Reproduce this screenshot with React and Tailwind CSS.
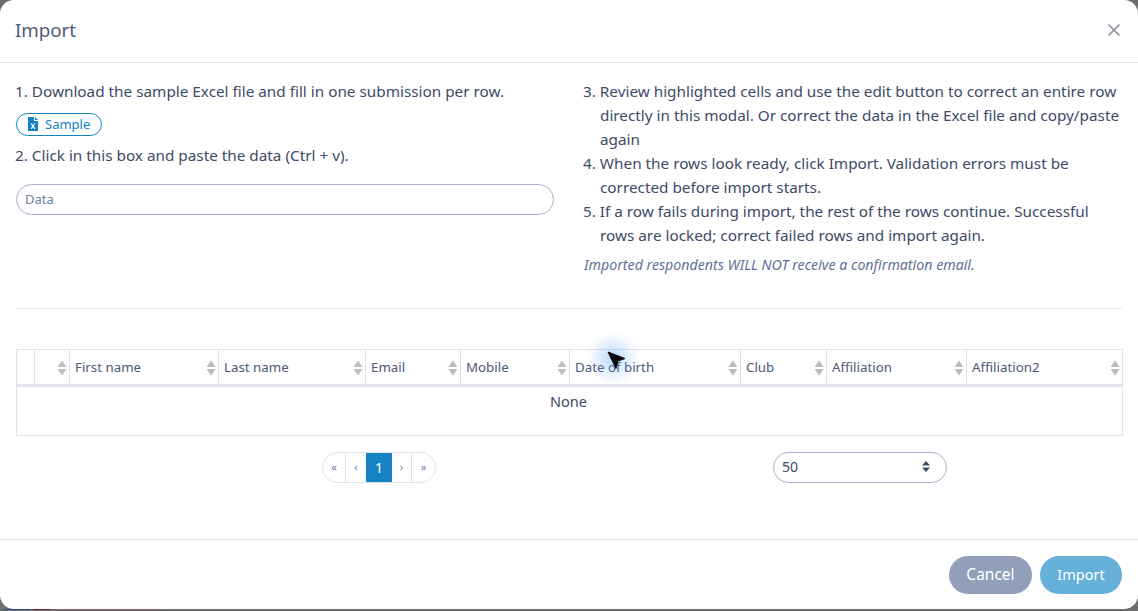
const columns = [
  { label: "", width: "w-[18px]", sort: false },
  { label: "", width: "w-[35px]", sort: true },
  { label: "First name", width: "w-[149px]", sort: true },
  { label: "Last name", width: "w-[147px]", sort: true },
  { label: "Email", width: "w-[95px]", sort: true },
  { label: "Mobile", width: "w-[109px]", sort: true },
  { label: "Date of birth", width: "w-[171px]", sort: true },
  { label: "Club", width: "w-[86px]", sort: true },
  { label: "Affiliation", width: "w-[140px]", sort: true },
  { label: "Affiliation2", width: "w-[156px]", sort: true },
];

const SortIcon = () => (
  <svg width="10" height="16" viewBox="0 0 10 16" className="absolute right-[2px] top-[10px]">
    <path d="M5 0.5 L9.5 7 H0.5 Z" fill="#bdbdbd" />
    <path d="M0.5 9 H9.5 L5 15.5 Z" fill="#bdbdbd" />
  </svg>
);

const ExcelIcon = () => (
  <svg width="10" height="14" viewBox="0 0 10 14">
    <path d="M0 0 H6 V4 H10 V14 H0 Z" fill="#1582c4" />
    <path d="M7 0 L10 3 H7 Z" fill="#1582c4" />
    <path d="M2.6 6.5 L4.2 9 L2.6 12 H3.9 L5 10 L6.1 12 H7.4 L5.8 9 L7.4 6.5 H6.1 L5 8.2 L3.9 6.5 Z" fill="#fff" />
  </svg>
);

const Cursor = () => (
  <div className="absolute left-[586px] top-[330px] w-[54px] h-[56px] bg-[radial-gradient(circle,rgba(70,150,255,0.38)_0%,rgba(70,150,255,0.15)_38%,rgba(70,150,255,0)_68%)]">
    <svg width="20" height="20" viewBox="0 0 20 20" className="absolute left-[21px] top-[21px]">
      <path d="M1 1 L18 7.5 L11 10 L9 17.5 Z" fill="#0a0a0a" stroke="#0a0a0a" strokeLinejoin="round" />
    </svg>
  </div>
);

const PageBtn = ({ children, active, className }) => (
  <div
    className={`flex items-center justify-center h-full ${
      active ? "bg-[#1582c4] text-white text-sm" : "text-[#6b7fa8] text-[11px]"
    } ${className}`}
  >
    {children}
  </div>
);

export default function App() {
  return (
    <div className="relative h-[611px] w-[1138px] overflow-hidden bg-[#6e6e6e] font-['Noto_Sans',sans-serif] text-[#3e4a68]">
      <div className="flex flex-col h-[609px] bg-white rounded-[14px]">
        <div className="flex items-center justify-between h-[63px] shrink-0 border-b border-[#dfe1ea] pl-[15px] pr-[16px] pb-[2px]">
          <h1 className="text-[18.7px] text-[#4f5b78]">Import</h1>
          <svg width="16" height="16" viewBox="0 0 16 16">
            <path d="M2.5 2.5 L13.5 13.5 M13.5 2.5 L2.5 13.5" stroke="#8a8f9c" strokeWidth="1.6" />
          </svg>
        </div>

        <div className="flex flex-col flex-1 pl-[16px] pr-[16px]">
          <div className="grid grid-cols-[567px_1fr] h-[246px] border-b border-[#e6e7ec] text-[15.3px] leading-6">
            <div className="pt-4 -ml-px">
              <p>1. Download the sample Excel file and fill in one submission per row.</p>
              <button className="flex items-center gap-[7px] h-[23px] w-[86px] mt-[10px] ml-px pb-px pl-[11px] border border-[#1582c4] rounded-full text-[#1582c4] text-[13px]">
                <ExcelIcon />
                Sample
              </button>
              <p className="mt-[7px]">2. Click in this box and paste the data (Ctrl + v).</p>
              <input
                placeholder="Data"
                className="block w-[538px] h-[31px] mt-[17px] ml-px px-2 pb-[2px] border border-[#a9b3cf] rounded-full text-[13px] placeholder:text-[#6b7fa8] outline-none"
              />
            </div>
            <div className="pt-4">
              <ol className="pl-[17px] -indent-[17px]">
                <li>3. Review highlighted cells and use the edit button to correct an entire row directly in this modal. Or correct the data in the Excel file and copy/paste again</li>
                <li>4. When the rows look ready, click Import. Validation errors must be corrected before import starts.</li>
                <li>5. If a row fails during import, the rest of the rows continue. Successful rows are locked; correct failed rows and import again.</li>
              </ol>
              <p className="mt-[6px] ml-px italic text-[14.2px] text-[#5d7199]">Imported respondents WILL NOT receive a confirmation email.</p>
            </div>
          </div>

          <table className="table-fixed w-[1106px] mt-[40px] border-collapse border border-[#e0e3e9] text-[13.3px]">
            <thead>
              <tr className="h-[36px] border-b-[3px] border-[#e0e3e9]">
                {columns.map((col, i) => (
                  <th key={i} className={`relative ${col.width} border-r border-[#e0e3e9] pl-[5px] pt-[2px] text-left font-normal text-[#4c5876]`}>
                    {col.label}
                    {col.sort && <SortIcon />}
                  </th>
                ))}
              </tr>
            </thead>
            <tbody>
              <tr>
                <td colSpan={10} className="h-[50px] pb-[19px] pr-[2px] text-center text-[14.5px]">None</td>
              </tr>
            </tbody>
          </table>

          <div className="flex items-center h-[31px] mt-[16px]">
            <div className="flex items-center h-full ml-[306px] border border-[#e0e3e9] rounded-full overflow-hidden">
              <PageBtn className="w-[23px] border-r border-[#e0e3e9]">«</PageBtn>
              <PageBtn className="w-[20px]">‹</PageBtn>
              <PageBtn active className="w-[26px]">1</PageBtn>
              <PageBtn className="w-[20px] border-r border-[#e0e3e9]">›</PageBtn>
              <PageBtn className="w-[23px]">»</PageBtn>
            </div>
            <div className="flex items-center justify-between w-[174px] h-full ml-[337px] pl-2 pr-[16px] pb-[2px] border border-[#a9b3cf] rounded-full text-[14px]">
              50
              <svg width="8" height="11" viewBox="0 0 8 11">
                <path d="M4 0 L8 4.5 H0 Z M0 6.5 H8 L4 11 Z" fill="#3e4a68" />
              </svg>
            </div>
          </div>
        </div>

        <div className="flex items-center justify-end gap-2 h-[70px] shrink-0 border-t border-[#e0e1e6] pr-4 pt-[1px] text-[15.5px] text-white">
          <button className="w-[83px] h-[38px] rounded-full bg-[#929fbb]">Cancel</button>
          <button className="w-[82px] h-[38px] rounded-full bg-[#66b1da] text-[14.5px]">Import</button>
        </div>
      </div>
      <div className="flex h-px">
        <span className="w-[25px] ml-[5px] bg-[#2b4a9a]" />
        <span className="w-[17px] ml-[3px] bg-[#7a1e3c]" />
        <span className="w-[105px] ml-[10px] bg-[#8f5a6c]" />
      </div>
      <Cursor />
    </div>
  );
}
